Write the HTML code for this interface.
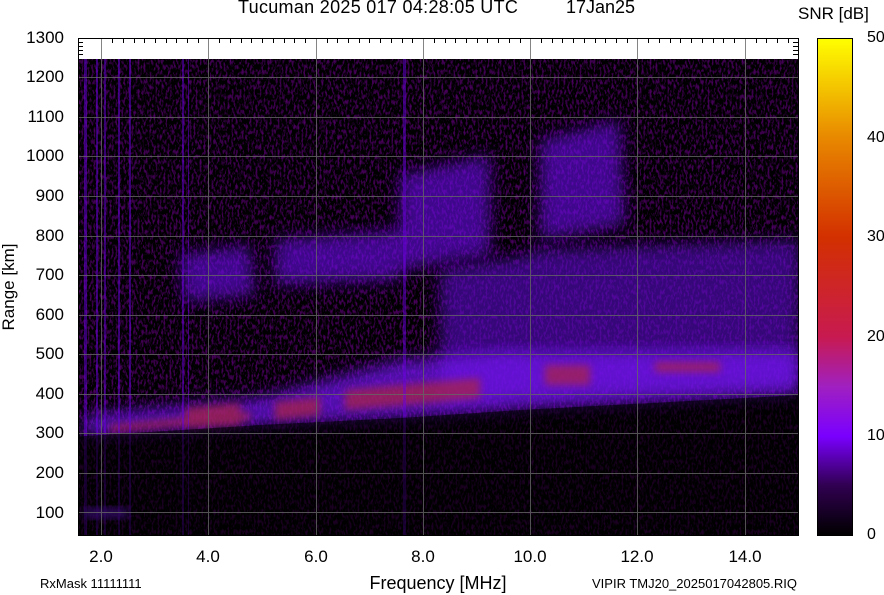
<!DOCTYPE html>
<html><head><meta charset="utf-8"><style>
html,body{margin:0;padding:0;background:#fff;width:884px;height:595px;overflow:hidden;font-family:"Liberation Sans",sans-serif;}
.t{position:absolute;white-space:nowrap;color:#000;}
</style></head><body>
<div class="t" style="left:238px;top:-3px;font-size:18px;letter-spacing:0.3px;">Tucuman 2025 017 04:28:05 UTC</div>
<div class="t" style="left:566px;top:-3px;font-size:18px;">17Jan25</div>
<div class="t" style="left:798px;top:4px;font-size:17px;">SNR [dB]</div>
<svg width="884" height="595" style="position:absolute;left:0;top:0" xmlns="http://www.w3.org/2000/svg">
<defs>
<filter id="b6"><feGaussianBlur stdDeviation="8"/></filter>
<filter id="b3"><feGaussianBlur stdDeviation="4"/></filter>
<filter id="noise" x="0" y="0" width="100%" height="100%">
<feTurbulence type="fractalNoise" baseFrequency="0.5 0.2" numOctaves="2" seed="4" result="n"/>
<feColorMatrix in="n" type="matrix" values="0 0 0 1.2 -0.6  0 0 0 0 0  0 0 0 2 -1.0  0 0 0 0 1"/>
</filter>
<linearGradient id="cb" x1="0" y1="1" x2="0" y2="0">
<stop offset="0" stop-color="#000"/>
<stop offset="0.1" stop-color="#300050"/>
<stop offset="0.2" stop-color="#7a00ff"/>
<stop offset="0.3" stop-color="#a020c0"/>
<stop offset="0.4" stop-color="#c81a50"/>
<stop offset="0.6" stop-color="#d33000"/>
<stop offset="0.8" stop-color="#e88800"/>
<stop offset="1" stop-color="#ffff00"/>
</linearGradient>
<clipPath id="pc"><rect x="78" y="59" width="720" height="476"/></clipPath>
</defs>
<rect x="78" y="59" width="720" height="476" fill="#000"/>
<g clip-path="url(#pc)">
<rect x="78" y="59" width="720" height="476" fill="#000" filter="url(#noise)" opacity="0.45"/>
<g filter="url(#b6)" fill="#6a10e8" opacity="0.6">
<polygon points="180,255 250,245 255,295 185,302"/>
<polygon points="275,240 400,230 400,280 275,285"/>
<polygon points="400,175 490,155 490,255 400,270"/>
<polygon points="540,140 620,120 625,225 540,240"/>
</g>
<g filter="url(#b6)" fill="#5a0cc8" opacity="0.6">
<polygon points="530,250 800,240 800,385 530,395"/>
<polygon points="440,270 530,255 530,395 440,405"/>
</g>
<g filter="url(#b6)" fill="#7414f4" opacity="0.7">
<polygon points="85,415 260,398 400,360 520,350 520,410 400,418 260,425 85,436"/>
<polygon points="520,352 800,350 800,395 520,410"/>
</g>
<g filter="url(#b3)" fill="#b02838" opacity="0.65">
<polygon points="110,425 250,412 250,420 110,432"/>
<polygon points="185,408 240,403 240,425 185,428"/>
<polygon points="275,402 320,397 320,415 275,420"/>
<polygon points="345,390 480,378 480,398 345,410"/>
<polygon points="545,365 590,365 590,385 545,385"/>
<polygon points="655,362 720,362 720,372 655,372"/>
</g>
<g fill="#6a00e0" opacity="0.5">
<rect x="84" y="59" width="3" height="476"/><rect x="96" y="59" width="2" height="476"/>
<rect x="104" y="59" width="2" height="476"/><rect x="118" y="59" width="2" height="476"/>
<rect x="129" y="59" width="2" height="476"/><rect x="182" y="59" width="2" height="476"/>
<rect x="188" y="59" width="1" height="476"/>
<rect x="403" y="59" width="3" height="476"/>
</g>
<g filter="url(#b3)" fill="#7a18ff" opacity="0.8"><rect x="84" y="507" width="44" height="12"/></g>
<polygon points="85,436 260,425 400,418 520,410 800,395 800,535 78,535 78,437" fill="#000" opacity="0.6"/>
</g>
<rect x="78" y="38" width="720" height="21" fill="#fff"/>
<g stroke="#666" stroke-width="1" opacity="0.8">
<line x1="101.5" y1="38" x2="101.5" y2="535"/><line x1="208.5" y1="38" x2="208.5" y2="535"/>
<line x1="316.5" y1="38" x2="316.5" y2="535"/><line x1="423.5" y1="38" x2="423.5" y2="535"/>
<line x1="530.5" y1="38" x2="530.5" y2="535"/><line x1="637.5" y1="38" x2="637.5" y2="535"/>
<line x1="745.5" y1="38" x2="745.5" y2="535"/>
<line x1="78" y1="77.5" x2="798" y2="77.5"/><line x1="78" y1="117.5" x2="798" y2="117.5"/>
<line x1="78" y1="156.5" x2="798" y2="156.5"/><line x1="78" y1="196.5" x2="798" y2="196.5"/>
<line x1="78" y1="236.5" x2="798" y2="236.5"/><line x1="78" y1="275.5" x2="798" y2="275.5"/>
<line x1="78" y1="315.5" x2="798" y2="315.5"/><line x1="78" y1="354.5" x2="798" y2="354.5"/>
<line x1="78" y1="394.5" x2="798" y2="394.5"/><line x1="78" y1="433.5" x2="798" y2="433.5"/>
<line x1="78" y1="473.5" x2="798" y2="473.5"/><line x1="78" y1="512.5" x2="798" y2="512.5"/>
</g>
<g stroke="#000" stroke-width="1">
<path d="M112.5 38v5M123.5 38v5M134.5 38v5M144.5 38v5M155.5 38v5M166.5 38v5M176.5 38v5M187.5 38v5M198.5 38v5M219.5 38v5M230.5 38v5M241.5 38v5M251.5 38v5M262.5 38v5M273.5 38v5M284.5 38v5M294.5 38v5M305.5 38v5M327.5 38v5M337.5 38v5M348.5 38v5M359.5 38v5M369.5 38v5M380.5 38v5M391.5 38v5M402.5 38v5M412.5 38v5M434.5 38v5M445.5 38v5M455.5 38v5M466.5 38v5M477.5 38v5M487.5 38v5M498.5 38v5M509.5 38v5M520.5 38v5M541.5 38v5M552.5 38v5M562.5 38v5M573.5 38v5M584.5 38v5M595.5 38v5M605.5 38v5M616.5 38v5M627.5 38v5M648.5 38v5M659.5 38v5M670.5 38v5M680.5 38v5M691.5 38v5M702.5 38v5M713.5 38v5M723.5 38v5M734.5 38v5M756.5 38v5M766.5 38v5M777.5 38v5M788.5 38v5"/>
<path d="M78 42.5h5M78 46.5h5M78 50.5h5M78 54.5h5M793 42.5h5M793 46.5h5M793 50.5h5M793 54.5h5"/>
</g>
<rect x="78.5" y="38.5" width="720" height="497" fill="none" stroke="#000" stroke-width="1"/>
<rect x="817.5" y="38.5" width="35" height="497" fill="url(#cb)" stroke="#000" stroke-width="1"/>
<g font-family="Liberation Sans, sans-serif" font-size="17" fill="#000">
<g text-anchor="end">
<text x="64" y="43">1300</text><text x="64" y="82">1200</text><text x="64" y="122">1100</text>
<text x="64" y="161">1000</text><text x="64" y="201">900</text><text x="64" y="241">800</text>
<text x="64" y="280">700</text><text x="64" y="320">600</text><text x="64" y="359">500</text>
<text x="64" y="399">400</text><text x="64" y="438">300</text><text x="64" y="478">200</text>
<text x="64" y="518">100</text>
</g>
<g text-anchor="middle">
<text x="101" y="562">2.0</text><text x="208" y="562">4.0</text><text x="316" y="562">6.0</text>
<text x="423" y="562">8.0</text><text x="530" y="562">10.0</text><text x="637" y="562">12.0</text>
<text x="745" y="562">14.0</text>
<text x="438" y="589" font-size="18">Frequency [MHz]</text>
</g>
<text transform="translate(14,287) rotate(-90)" text-anchor="middle">Range [km]</text>
<g font-size="16">
<text x="867" y="42">50</text><text x="867" y="142">40</text><text x="867" y="241">30</text>
<text x="867" y="341">20</text><text x="867" y="440">10</text><text x="867" y="539">0</text>
</g>
<text x="40" y="588" font-size="13">RxMask 11111111</text>
<text x="592" y="588" font-size="13">VIPIR  TMJ20_2025017042805.RIQ</text>
</g>
</svg>
</body></html>
